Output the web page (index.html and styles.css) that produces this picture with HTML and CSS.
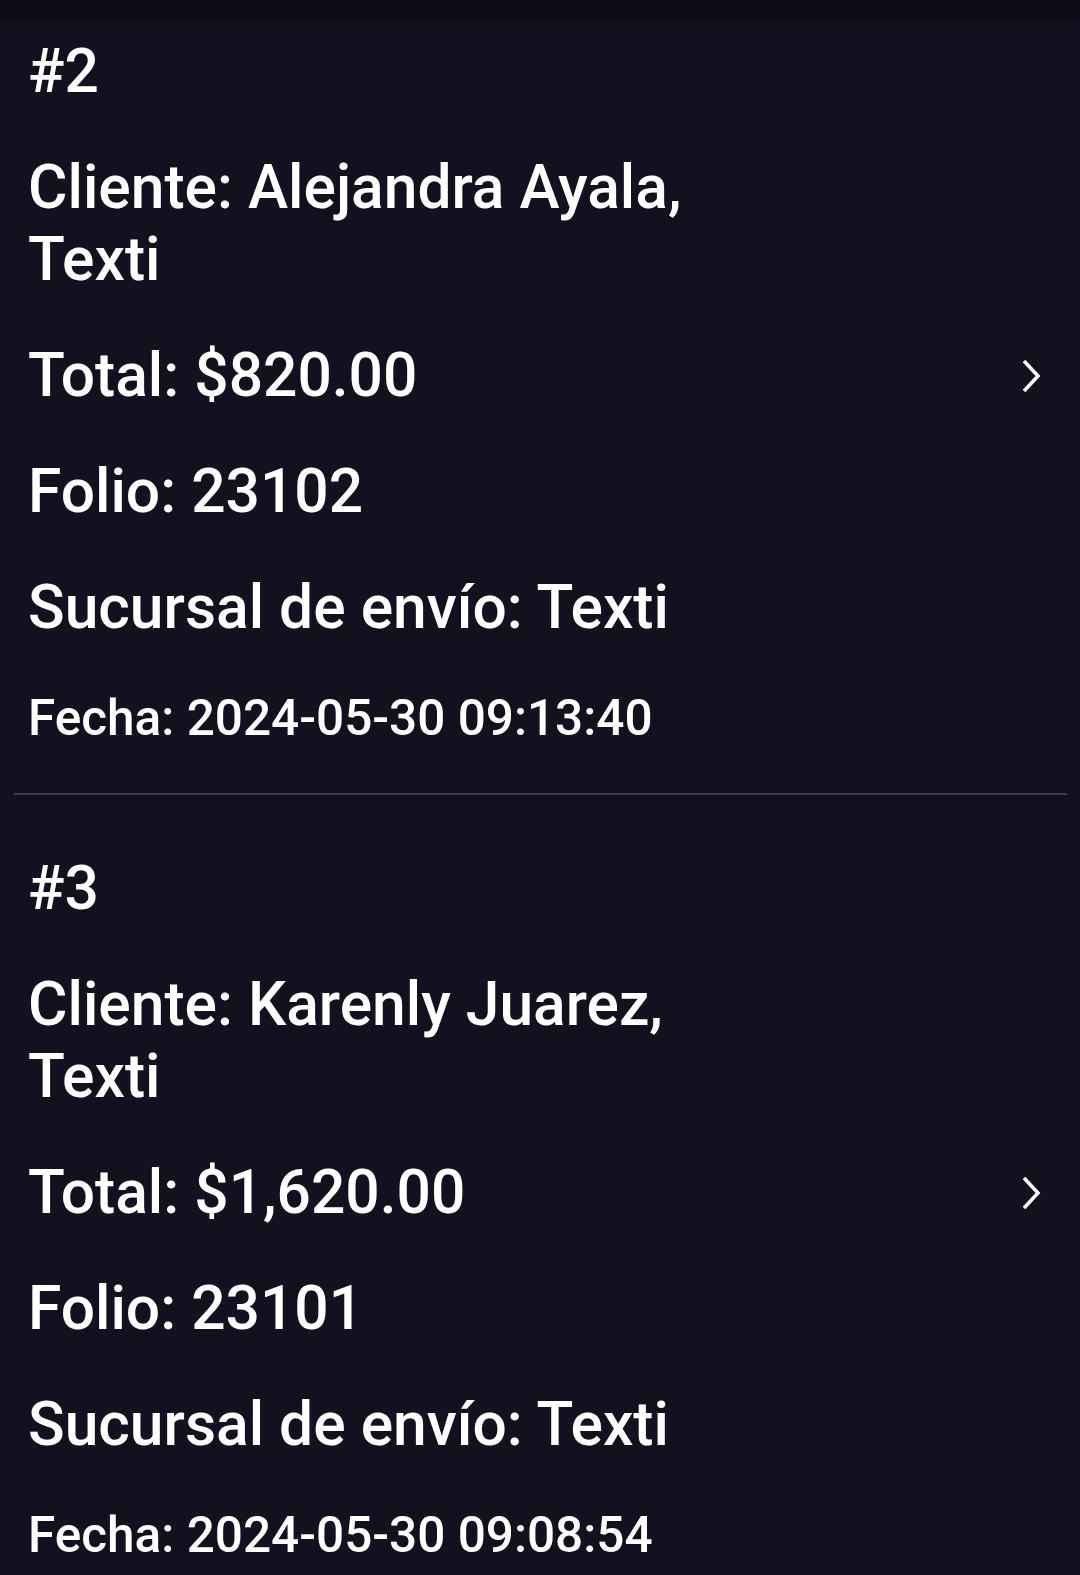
FILE: index.html
```html
<!DOCTYPE html>
<html>
<head>
<meta charset="utf-8">
<title>Pedidos</title>
<link rel="stylesheet" href="styles.css">
</head>
<body>
<div class="top-strip"></div>

<div class="orders">
	<div class="order">
		<div class="order-body">
			<p class="line">#2</p>
			<p class="line client">Cliente: Alejandra Ayala, Texti</p>
			<div class="line total-row">
				<span>Total: $820.00</span>
				<svg class="chevron" width="20" height="34" viewBox="0 0 20 34"><polyline points="3,2 17,17 3,32" /></svg>
			</div>
			<p class="line">Folio: 23102</p>
			<p class="line">Sucursal de envío: Texti</p>
			<p class="line date">Fecha: 2024-05-30 09:13:40</p>
		</div>
		<div class="divider"></div>
	</div>

	<div class="order">
		<div class="order-body">
			<p class="line">#3</p>
			<p class="line client">Cliente: Karenly Juarez, Texti</p>
			<div class="line total-row">
				<span>Total: $1,620.00</span>
				<svg class="chevron" width="20" height="34" viewBox="0 0 20 34"><polyline points="3,2 17,17 3,32" /></svg>
			</div>
			<p class="line">Folio: 23101</p>
			<p class="line">Sucursal de envío: Texti</p>
			<p class="line date">Fecha: 2024-05-30 09:08:54</p>
		</div>
		<div class="divider"></div>
	</div>
</div>
</body>
</html>
```

FILE: styles.css
```css
html,body,p{margin: 0;padding: 0;}
body{background-color: #11111f;color: #fff;font-family: Roboto, "Noto Sans", sans-serif;font-weight: 500;overflow: hidden;}

.top-strip{height: 22px;background-color: #0d0d18;}

.order{padding-top: 58px;}
.order:first-child{padding-top: 14px;}
.order-body{display: flex;flex-direction: column;gap: 44px;padding: 0 39px 0 28px;}

.line{font-size: 60.5px;line-height: 72px;}
.client{max-width: 700px;}
.date{font-size: 49.5px;line-height: 60px;}

.total-row{display: flex;justify-content: space-between;align-items: center;}
.chevron{fill: none;stroke: #fff;stroke-width: 3.5;}

.divider{height: 2px;margin: 45px 13px 0 14px;background-color: #3b3b4a;}
```
